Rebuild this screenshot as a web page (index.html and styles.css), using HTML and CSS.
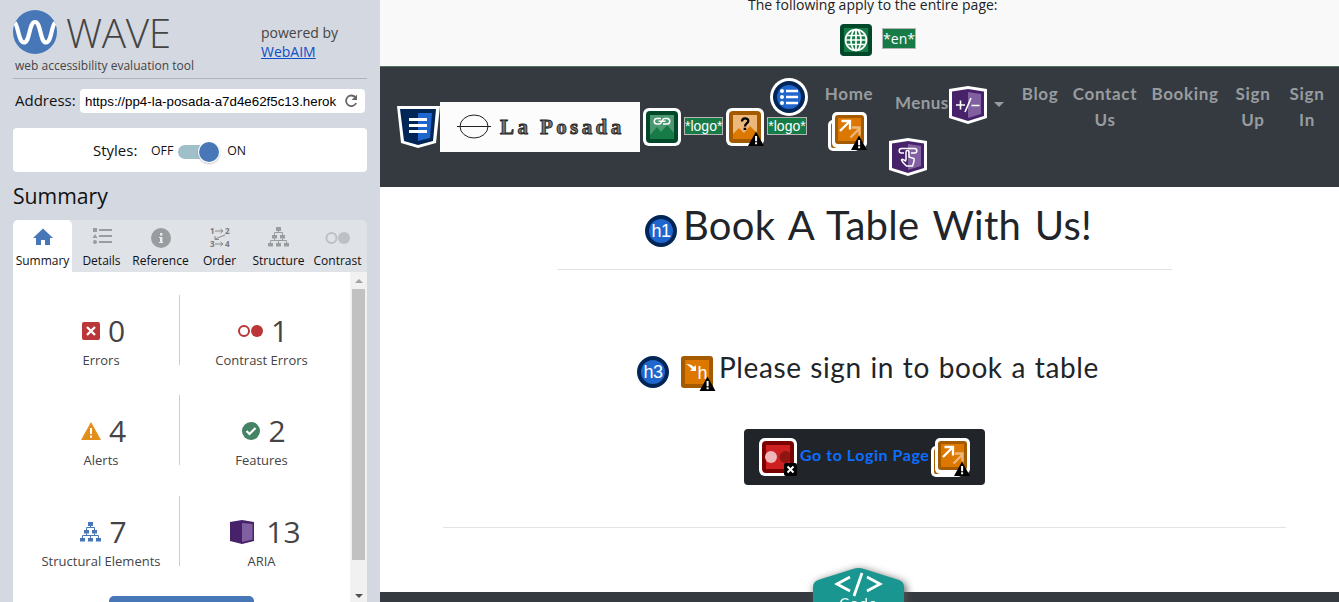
FILE: index.html
```
<!DOCTYPE html>
<html lang="en">
<head>
<meta charset="utf-8">
<title>WAVE - La Posada</title>
<link rel="stylesheet" href="styles.css">
</head>
<body>
<svg class="defs" width="0" height="0" aria-hidden="true">
  <symbol id="warn" viewBox="0 0 16 15"><path d="M8 0.5L16 15H0z" fill="#000"/><path d="M7.1 5h2v5.2h-2zM7.1 11.3h2v1.9h-2z" fill="#fff"/></symbol>
  <symbol id="struct" viewBox="0 0 21 20"><path d="M8 0h5v4H8zM4 8h5v3.4H4zM12 8h5v3.4h-5zM0 16h5v3.4H0zM8 16h5v3.4H8zM16 16h5v3.4h-5z" fill="currentColor"/><path d="M10.5 4v1.5M6.5 8V5.5h8V8M6.5 11.500v2M14.500 11.500v2M2.500 16v-2.500h16V16M10.500 16v-2.500" fill="none" stroke="currentColor"/></symbol>
  <symbol id="multi" viewBox="0 0 39 39"><rect x="0" y="8" width="32" height="31" rx="5" fill="#fff"/><rect x="3" y="11" width="27" height="25" rx="2" fill="#a45b00"/><rect x="4" y="0" width="35" height="36" rx="5" fill="#fff"/><rect x="7" y="3" width="29" height="29" rx="3" fill="#a45b00"/><rect x="10" y="6" width="23" height="23" fill="#dc7800"/><path d="M22.500 25.500L31 17M24 15.500h7.500v8" fill="none" stroke="#edb67a" stroke-width="2.300"/><path d="M12 19L21 10M13.500 9h8.500v8.500" fill="none" stroke="#fff" stroke-width="2.300"/><use href="#warn" x="23" y="23" width="16" height="15"/></symbol>
</svg>
<div class="app">
  <aside class="sidebar">
    <header class="brand">
      <div>
        <div class="brand-row">
          <svg width="44" height="44" viewBox="0 0 44 44"><circle cx="22" cy="22" r="22" fill="#4777b7"/><path d="M2 13C5 15 5.500 32.500 11 32.500C17 32.500 16 12 22 12S27 32.500 33 32.500C38.500 32.500 38.500 15 42 13" fill="none" stroke="#fff" stroke-width="4.200"/></svg>
          <span class="wordmark">WAVE</span>
        </div>
        <div class="tagline">web accessibility evaluation tool</div>
      </div>
      <div class="powered">powered by<br><a href="#">WebAIM</a></div>
    </header>
    <div class="address">
      <span class="address-label">Address:</span>
      <div class="field"><span class="url">https://pp4-la-posada-a7d4e62f5c13.herok</span>
        <svg width="14" height="14" viewBox="0 0 14 14"><path d="M11.500 3.500A5.300 5.300 0 1 0 12.200 9" fill="none" stroke="#666" stroke-width="1.800"/><path d="M13 0.500V6H7.500z" fill="#666"/></svg>
      </div>
    </div>
    <div class="styles-panel"><span class="styles-label">Styles:</span><span>OFF</span><span class="switch"><span class="knob"></span></span><span>ON</span></div>
    <h2 class="side-title">Summary</h2>
    <nav class="tabs">
      <div class="tab active"><svg width="20" height="20" viewBox="0 0 20 20"><path d="M10 1.500L20 11h-3v7h-5v-5H8v5H3v-7H0z" fill="#4777b7"/></svg>Summary</div>
      <div class="tab"><svg width="20" height="20" viewBox="0 0 20 20"><path d="M1 1h4v4H1zM3 7l2.500 4h-5z" fill="#999da0"/><circle cx="3" cy="15" r="2" fill="#999da0"/><path d="M7 3h13M7 9h13M7 15h13" stroke="#999da0" stroke-width="2"/></svg>Details</div>
      <div class="tab"><svg width="20" height="20" viewBox="0 0 20 20"><circle cx="10" cy="10" r="10" fill="#999da0"/><path d="M9 5h2.400v2.400H9zM8 9h3.400v5H12v1H8v-1h1v-4H8z" fill="#e9ebed"/></svg>Reference</div>
      <div class="tab"><svg width="20" height="20" viewBox="0 0 20 20" class="order-icon"><text x="0" y="7">1</text><text x="15" y="7">2</text><text x="0" y="20">3</text><text x="15" y="20">4</text><path d="M5 4h8M10.500 2L13 4l-2.500 2M15 8L5 12M5 9v3.500h4M5 17h8M10.500 15l2.500 2-2.500 2"/></svg>Order</div>
      <div class="tab"><svg width="21" height="20" class="gray"><use href="#struct"/></svg>Structure</div>
      <div class="tab"><svg width="26" height="20" viewBox="0 0 26 20"><circle cx="6.500" cy="10" r="5" fill="none" stroke="#bdc0c4" stroke-width="2"/><circle cx="19" cy="10" r="6" fill="#bdc0c4"/></svg>Contrast</div>
    </nav>
    <section class="panel">
      <div class="stats">
        <div class="stat left"><div class="count"><svg width="18" height="18" viewBox="0 0 18 18"><rect width="18" height="18" rx="2" fill="#bb3638"/><path d="M5 5l8 8M13 5l-8 8" stroke="#fff" stroke-width="2.300"/></svg><span>0</span></div><p>Errors</p></div>
        <div class="stat"><div class="count wide"><svg width="25" height="14" viewBox="0 0 25 14"><circle cx="6" cy="7" r="5" fill="none" stroke="#bb3638" stroke-width="2"/><circle cx="19" cy="7" r="6" fill="#bb3638"/></svg><span>1</span></div><p>Contrast Errors</p></div>
        <div class="stat left"><div class="count"><svg width="20" height="18" viewBox="0 0 20 18"><path d="M10 0L20 18H0z" fill="#e38d1b"/><path d="M9 6h2v6H9zM9 13.500h2v2.200H9z" fill="#fff"/></svg><span>4</span></div><p>Alerts</p></div>
        <div class="stat"><div class="count"><svg width="18" height="18" viewBox="0 0 18 18"><circle cx="9" cy="9" r="9" fill="#448364"/><path d="M4.500 9l3 3L13.500 6" fill="none" stroke="#fff" stroke-width="2.200"/></svg><span>2</span></div><p>Features</p></div>
        <div class="stat left"><div class="count"><svg width="21" height="20" class="blue"><use href="#struct"/></svg><span>7</span></div><p>Structural Elements</p></div>
        <div class="stat"><div class="count aria"><svg width="24" height="24" viewBox="0 0 24 24"><path d="M0 2L12 0l12 2v19l-12 3L0 21z" fill="#47226b"/><path d="M12 3l10.500 1v15.500L12 22z" fill="#8060a0"/></svg><span>13</span></div><p>ARIA</p></div>
        <div class="more"></div>
      </div>
      <div class="scrollbar"><i class="arrow up"></i><i class="thumb"></i><i class="arrow down"></i></div>
    </section>
  </aside>

  <main class="page">
    <div class="notice">
      <p>The following apply to the entire page:</p>
      <div class="notice-row">
        <svg width="32" height="32" viewBox="0 0 32 32"><rect width="32" height="32" rx="4" fill="#00482a"/><rect x="4" y="4" width="24" height="24" fill="#177b48"/><g fill="none" stroke="#fff" stroke-width="1.700"><circle cx="16" cy="16" r="10.500"/><ellipse cx="16" cy="16" rx="5" ry="10.500"/><path d="M16 5.500v21M7 11.500h18M7 20.500h18M5.500 16h21"/></g></svg>
        <span class="tag en">*en*</span>
      </div>
    </div>
    <nav class="navbar">
      <svg class="css-badge" width="43" height="42" viewBox="0 0 43 42"><path d="M0 0h43l-4 37-18 5L4 37z" fill="#fff"/><path d="M3 3h36l-3 32-15 4-14-4z" fill="#002557"/><path d="M21 7h14l-2 25-12 3z" fill="#1f66cd"/><path d="M12 13.500h18M12 19.500h18M12 25.500h18" stroke="#fff" stroke-width="3"/></svg>
      <div class="logo"><svg width="34" height="26" viewBox="0 0 34 26"><ellipse cx="17" cy="12.500" rx="14" ry="11.500" fill="none" stroke="#222"/><path d="M0 12.500h34" stroke="#222"/></svg><span>La Posada</span></div>
      <svg class="ic-link" width="38" height="38" viewBox="0 0 38 38"><rect width="38" height="38" rx="6" fill="#fff"/><rect x="3" y="3" width="32" height="32" rx="4" fill="#00482a"/><rect x="7" y="7" width="24" height="24" fill="#4c9871"/><path d="M7 27l7-8 4 5 6-7 7 8v6H7z" fill="#177b48"/><path d="M18 10.500h-4a2.700 2.700 0 0 0 0 5.500h2.500c2.500 0 2.500-5.500 5-5.500H24a2.700 2.700 0 0 1 0 5.500h-4M15.500 13.300h3M19.500 13.300h3" fill="none" stroke="#fff" stroke-width="1.500"/></svg>
      <span class="tag first">*logo*</span>
      <svg class="ic-alt" width="38" height="38" viewBox="0 0 38 38"><rect width="38" height="38" rx="6" fill="#fff"/><rect x="3" y="3" width="32" height="32" rx="4" fill="#a45b00"/><rect x="7" y="7" width="24" height="24" fill="#edb67a"/><path d="M7 26l6-6 5 5 6-7 7 7v6H7z" fill="#dc7800"/><path d="M16 13.500c0-4 6.300-4 6.300-.5 0 2.500-3.300 2-3.300 5.500M17.600 20.800h2.600" fill="none" stroke="#000" stroke-width="2.300"/><use href="#warn" x="22" y="23" width="16" height="15"/></svg>
      <div class="logo-end">
        <svg width="38" height="38" viewBox="0 0 38 38"><circle cx="19" cy="19" r="19" fill="#fff"/><circle cx="19" cy="19" r="16" fill="#002557"/><circle cx="19" cy="19" r="12" fill="#1f66cd"/><path d="M16 13h12M16 19h12M16 25h12" stroke="#fff" stroke-width="2.300"/><g fill="#fff"><circle cx="12" cy="13" r="2"/><circle cx="12" cy="19" r="2"/><circle cx="12" cy="25" r="2"/></g></svg>
        <span class="tag">*logo*</span>
      </div>
      <div class="nav-item home"><span>Home</span><svg width="39" height="39"><use href="#multi"/></svg></div>
      <div class="nav-item menus">
        <div class="menus-row"><span>Menus</span><svg width="38" height="38" viewBox="0 0 38 38"><path d="M0 3L19 0l19 3v29l-19 6L0 32z" fill="#fff"/><path d="M3 5.500L19 3l16 2.500v24.500l-16 5-16-5z" fill="#47226b"/><path d="M19 6l13 2v20l-13 4z" fill="#8060a0"/><path d="M7 19h9M11.500 14.500v9M22.500 19.500h8M22 12l-6 14" stroke="#fff" stroke-width="1.600"/></svg><i class="caret"></i></div>
        <svg width="38" height="38" viewBox="0 0 38 38"><path d="M0 3L19 0l19 3v29l-19 6L0 32z" fill="#fff"/><path d="M3 5.500L19 3l16 2.500v24.500l-16 5-16-5z" fill="#47226b"/><path d="M19 6l13 2v20l-13 4z" fill="#8060a0"/><path d="M15 15h-2.500a2.300 2.300 0 0 1 0-4.600h13a2.300 2.300 0 0 1 0 4.600H22M17 22.500v-8.500a1.500 1.500 0 0 1 3 0v5l5 1.500v3l-1.500 4.500h-6L14 24.500l-1.500-2.500c0-1 2-1 4.500 1.500" fill="none" stroke="#fff" stroke-width="1.500"/></svg>
      </div>
      <div class="nav-item blog">Blog</div>
      <div class="nav-item contact">Contact<br>Us</div>
      <div class="nav-item booking">Booking</div>
      <div class="nav-item sign-up">Sign<br>Up</div>
      <div class="nav-item sign-in">Sign<br>In</div>
    </nav>
    <section class="content">
      <div class="title-row">
        <span class="hbadge">h1</span><h1>Book A Table With Us!</h1>
      </div>
      <hr class="rule-top">
      <div class="sub-row">
        <span class="hbadge">h3</span>
        <svg width="35" height="35" viewBox="0 0 35 35"><rect width="32" height="32" rx="3" fill="#a45b00"/><rect x="4" y="4" width="24" height="24" fill="#dc7800"/><path d="M5 8c4 0 6 1 8 3l2-2v6H9l2-2c-2-2-3-3-6-5z" fill="#fff"/><text x="16.500" y="23" class="skip">h</text><use href="#warn" x="18" y="20" width="17" height="15"/></svg>
        <h3>Please sign in to book a table</h3>
      </div>
      <div class="login">
        <svg width="38" height="38" viewBox="0 0 38 38"><rect width="38" height="38" rx="6" fill="#fff"/><rect x="3" y="3" width="32" height="32" rx="4" fill="#7b0000"/><rect x="7" y="7" width="24" height="24" fill="#ce2020"/><circle cx="12" cy="19" r="6" fill="#efb7b7"/><path d="M31 15a6 6 0 1 0 0 8z" fill="#8f1414"/><rect x="25" y="25" width="13" height="13" rx="2" fill="#000"/><path d="M28.500 28.500l6 6M34.500 28.500l-6 6" stroke="#fff" stroke-width="2"/></svg>
        <a>Go to Login Page</a>
        <svg width="39" height="39"><use href="#multi"/></svg>
      </div>
      <hr class="rule-bottom">
    </section>
    <footer class="footer">
      <div class="code-tab">
        <svg width="91" height="36" viewBox="0 0 91 36"><path d="M0 36V19q0-5 5-7L40 1q5.500-2 11 0l35 11q5 2 5 7v17z" fill="#19968f"/><path d="M37 9L24 16l13 7M54 9l13 7-13 7M49 5l-8 23" fill="none" stroke="#fff" stroke-width="2.800"/></svg>
        <span>Code</span>
      </div>
    </footer>
  </main>
</div>
</body>
</html>
```

FILE: styles.css
```
* { box-sizing: border-box; }
body { margin: 0; width: 1339px; height: 602px; overflow: hidden; background: #fff; }
p, h1, h2, h3 { margin: 0; font-weight: 400; }
svg { flex: none; display: block; }
.defs { position: absolute; }
.app { display: flex; height: 602px; }

/* sidebar */
.sidebar { width: 380px; flex: none; height: 602px; overflow: hidden; padding: 10px 13px 0; background: #d4d8e0; font-family: "Open Sans", sans-serif; color: #111; }
.brand { display: flex; height: 69px; border-bottom: 1px solid #b0b4b8; color: #444; }
.brand-row { display: flex; height: 44px; gap: 9px; }
.wordmark { font-size: 40.5px; font-weight: 300; line-height: 46px; letter-spacing: -0.4px; }
.tagline { font-size: 12px; line-height: 24px; padding-left: 2px; white-space: nowrap; }
.brand > div:first-child { width: 248px; }
.powered { font-size: 14px; line-height: 19px; padding-top: 13px; }
.powered a { color: #0c4fc7; }
.address { display: flex; align-items: center; margin-top: 10px; height: 24px; padding-left: 2px; }
.address-label { width: 65px; font-size: 15px; line-height: 20px; margin-top: -2px; }
.field { display: flex; align-items: center; justify-content: space-between; width: 285px; height: 24px; padding: 0 7px 0 5px; border-radius: 4px; background: #fff; }
.url { width: 253px; white-space: nowrap; font: 13.33px "Liberation Sans", sans-serif; color: #000; }
.styles-panel { display: flex; align-items: center; height: 44px; margin-top: 15px; padding-left: 80px; border-radius: 4px; background: #fff; font-size: 12.3px; }
.styles-label { font-size: 15px; width: 58px; }
.switch { display: flex; align-items: center; justify-content: flex-end; width: 41px; height: 14px; margin: 4px 8px 0 5px; border-radius: 7px; background: #9fc0c9; }
.knob { flex: none; width: 20px; height: 20px; border-radius: 50%; background: #4777b7; box-shadow: 0 0 0 1px #fff, 0 1px 3px #777; }
.side-title { font-size: 21.2px; line-height: 30px; height: 48px; padding-top: 9px; }
.tabs { display: flex; height: 52px; border-radius: 5px 5px 0 0; background: #dfe2e6; }
.tab { display: flex; flex-direction: column; align-items: center; width: 59px; flex: none; padding-top: 7px; gap: 5px; font-size: 12px; line-height: 17px; border-radius: 5px 5px 0 0; }
.tab.active { background: #fff; }
.tab:nth-child(3) svg, .tab:nth-child(6) svg { position: relative; top: 1px; }
.order-icon { overflow: visible; font: bold 8px "Open Sans", sans-serif; fill: #777; }
.order-icon path { fill: none; stroke: #888; }
.gray { color: #999da0; }
.blue { color: #4777b7; }
.panel { display: flex; height: 330px; background: #fff; color: #444; }
.stats { display: grid; grid-template-columns: 167px 163px; grid-template-rows: 70px 71px 70px 40px; row-gap: 30px; padding-top: 23px; width: 337px; height: 330px; overflow: hidden; }
.stat { display: flex; flex-direction: column; align-items: center; height: 70px; padding-top: 16px; }
.stat.left { border-right: 1px solid #ccc; padding-left: 10px; }
.count { display: flex; align-items: center; gap: 8px; height: 40px; padding-left: 5px; font-size: 30px; line-height: 40px; }
.count.wide { padding-left: 3px; }
.count.aria { gap: 12px; padding-left: 8px; }
.stat p { font-size: 13px; line-height: 18px; }
.more { width: 145px; height: 40px; margin-left: 96px; border-radius: 5px; background: #4777b7; }
.scrollbar { display: flex; flex-direction: column; align-items: center; width: 17px; height: 330px; background: #f1f1f1; }
.arrow { width: 0; height: 0; border: 4px solid transparent; }
.up { margin-top: 3px; border-bottom-color: #a3a3a3; }
.thumb { width: 13px; height: 271px; margin-top: 6px; background: #c1c1c1; }
.down { margin-top: 34px; border-top-color: #505050; }

/* page */
.page { width: 959px; height: 602px; display: flex; flex-direction: column; font-family: Lato, sans-serif; color: #212529; }
.notice { height: 67px; flex: none; background: #f9f9f9; border-bottom: 1px solid #56745f; }
.notice p { height: 24px; padding: 0 0 0 368px; font: 14px/10px "Open Sans", sans-serif; color: #222; white-space: nowrap; }
.notice-row { display: flex; padding-left: 460px; gap: 10px; }
.tag { display: block; height: 18px; width: 40px; border: 1px solid #b5b5b5; background: #177b48; color: #fff; font: 14px/17px "Liberation Sans", sans-serif; text-align: center; white-space: nowrap; }
.tag.first { width: 39px; }
.tag.en { width: 34px; height: 21px; margin-top: 4px; font: 14px/19px "Open Sans", sans-serif; }
.navbar { display: flex; align-items: flex-start; flex: none; height: 120px; padding-left: 17px; background: #343a40; color: #999c9f; font-size: 17px; font-weight: 700; line-height: 26px; letter-spacing: .65px; }
.css-badge { margin-top: 39px; }
.logo { display: flex; align-items: center; gap: 9px; width: 200px; height: 50px; margin-top: 35px; padding-left: 17px; background: #fcfcfc; color: #777; font: 700 21px "Liberation Serif", serif; letter-spacing: 3.4px; white-space: nowrap; -webkit-text-stroke: .9px #222; }
.ic-link, .ic-alt { margin: 41px 3px 0; }
.navbar > .tag { margin-top: 50px; letter-spacing: 0; font-weight: 400; }
.logo-end { display: flex; flex-direction: column; align-items: flex-end; width: 41px; padding-top: 11px; gap: 1px; }
.logo-end .tag { letter-spacing: 0; margin-right: 1px; }
.nav-item { text-align: center; padding-top: 14px; flex: none; white-space: nowrap; }
.home { display: flex; flex-direction: column; align-items: center; width: 48px; margin-left: 17px; gap: 5px; }
.home svg { margin-right: 3px; }
.menus { display: flex; flex-direction: column; width: 115px; margin-left: 16px; padding-top: 19px; gap: 14px; }
.menus-row { display: flex; align-items: center; padding-left: 6px; }
.menus-row span { width: 55px; text-align: left; line-height: 34px; margin-bottom: 4px; letter-spacing: .4px; }
.caret { margin: -2px 0 0 7px; border: 5px solid transparent; border-top-color: #999c9f; border-bottom: 0; }
.blog { width: 40px; margin-left: 16px; }
.contact { width: 68px; margin-left: 11px; }
.booking { width: 72px; margin-left: 10px; }
.sign-up { width: 40px; margin-left: 12px; }
.sign-in { width: 40px; margin-left: 14px; }
.content { height: 405px; flex: none; }
.title-row { display: flex; padding: 14px 0 0 265px; height: 82px; }
.hbadge { flex: none; width: 32px; height: 32px; border: 4px solid #002557; border-radius: 50%; background: #1f66cd; color: #fff; font: 18px/25px "Liberation Sans", sans-serif; text-align: center; margin-top: 14px; letter-spacing: -.5px; }
h1 { font-size: 40px; line-height: 48px; letter-spacing: .3px; word-spacing: 3px; margin-left: 6px; white-space: nowrap; }
hr { height: 1px; border: 0; margin: 0; background: #e3e3e3; }
.rule-top { width: 615px; margin-left: 177px; }
.sub-row { display: flex; height: 159px; padding: 72px 0 0 257px; }
.sub-row svg { margin: 14px 0 0 12px; }
.skip { font: 18px "Liberation Sans", sans-serif; fill: #fff; }
h3 { font-size: 28px; line-height: 34px; letter-spacing: .6px; word-spacing: 1px; margin: 8px 0 0 3px; white-space: nowrap; }
.login { display: flex; align-items: center; width: 241px; height: 56px; margin-left: 364px; padding-left: 15px; border-radius: 4px; background: #212529; color: #0d6efd; font-size: 16px; font-weight: 700; letter-spacing: .55px; white-space: nowrap; }
.login a { width: 134px; padding-left: 3px; margin-top: -6px; }
.rule-bottom { width: 843px; margin: 42px 0 0 63px; }
.footer { height: 10px; flex: none; background: #343a40; position: relative; }
.code-tab { position: absolute; left: 433px; top: -24px; width: 91px; height: 34px; filter: drop-shadow(2px 2px 4px #555); }
.code-tab span { position: absolute; top: 26px; left: 0; width: 91px; text-align: center; color: #fff; font-size: 15px; line-height: 18px; letter-spacing: 1px; }
```
